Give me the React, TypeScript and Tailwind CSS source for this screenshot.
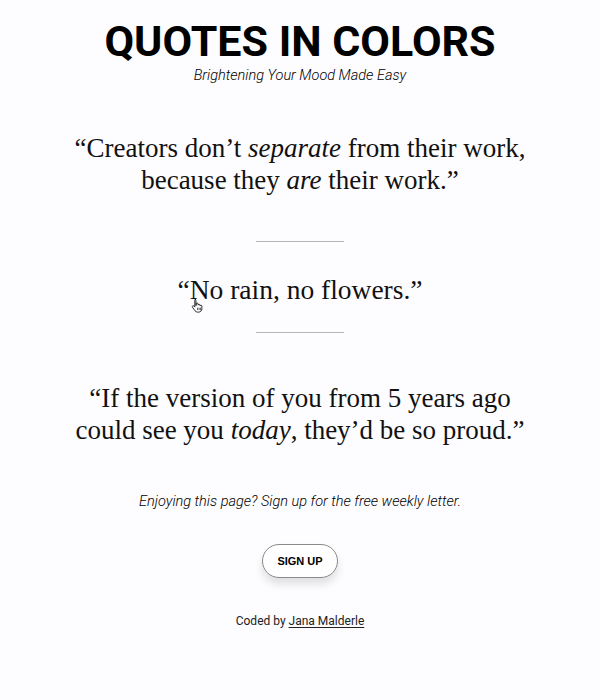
import React from "react";

const serif = { fontFamily: '"Liberation Serif", "DejaVu Serif", serif' };

function Divider() {
  return <div className="mx-auto h-px w-[88px] bg-[#b5b5b5]" />;
}

export default function App() {
  return (
    <div className="min-h-[700px] w-full bg-[#fdfcfe] text-black" style={{ fontFamily: 'Roboto, "Liberation Sans", sans-serif' }}>
      <div className="flex flex-col items-center pt-[17px]">
        <h1 className="text-[43px] font-bold leading-[48px]">QUOTES IN COLORS</h1>
        <p className="mt-[2px] text-[14.5px] font-light italic leading-[18px] text-black">Brightening Your Mood Made Easy</p>

        <div className="mt-[47px] text-center text-[27px] leading-[32px] text-[#111]" style={serif}>
          <p>“Creators don’t <i>separate</i> from their work,</p>
          <p>because they <i>are</i> their work.”</p>
        </div>

        <div className="mt-[45px] w-full"><Divider /></div>

        <div className="relative mt-[32px] text-center text-[27.5px] leading-[32px] text-[#111]" style={serif}>
          <p>“No rain, no flowers.”</p>
          <svg className="absolute left-[14px] top-[24px]" width="13" height="15" viewBox="0 0 12 14">
            <path d="M3.5 1.2c.6 0 1 .4 1 1V7l.3-.1V5.6c0-.5.4-.9.9-.9s.9.4.9.9v1.1c.1-.5.5-.8.9-.8.5 0 .9.4.9.9v.6c.1-.4.5-.7.9-.7.5 0 .8.4.8.9V10c0 1.8-1.4 3.2-3.2 3.2H6.2c-1 0-1.9-.5-2.5-1.3L1.3 8.6c-.3-.4-.2-1 .2-1.3.4-.3.9-.2 1.2.2l.8 1V2.2c0-.6.4-1 1-1z" fill="#fff" stroke="#222" strokeWidth="0.9" />
            <path d="M6.1 9v2.3M7.5 9v2.3M8.9 9v2.3" stroke="#222" strokeWidth="0.7" />
          </svg>
        </div>

        <div className="mt-[26px] w-full"><Divider /></div>

        <div className="mt-[49px] text-center text-[27px] leading-[32px] text-[#111]" style={serif}>
          <p>“If the version of you from 5 years ago</p>
          <p>could see you <i>today</i>, they’d be so proud.”</p>
        </div>

        <p className="mt-[47px] text-[14.5px] font-light italic leading-[18px] text-black">Enjoying this page? Sign up for the free weekly letter.</p>

        <button
          className="mt-[33px] h-[34px] w-[76px] rounded-full border border-[#8a8a8a] bg-white text-[11px] font-bold text-black shadow-[0_6px_8px_rgba(0,0,0,0.12)]"
          style={{ fontFamily: '"Liberation Sans", Arial, sans-serif' }}
        >
          SIGN UP
        </button>

        <p className="mt-[35px] text-[12px] font-normal leading-[16px] text-[#222]">
          Coded by <span className="underline underline-offset-2">Jana Malderle</span>
        </p>
      </div>
    </div>
  );
}
